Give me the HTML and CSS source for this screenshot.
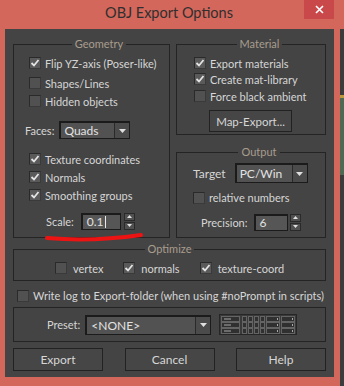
FILE: index.html
```html
<!DOCTYPE html>
<html>
<head>
<meta charset="utf-8">
<title>OBJ Export Options</title>
<link rel="stylesheet" href="styles.css">
</head>
<body>
<div class="screen">
  <div class="titlebar">
    <div class="title">OBJ Export Options</div>
    <div class="close">
      <svg width="9" height="9" viewBox="0 0 9 9"><path d="M1 1 L8 8 M8 1 L1 8" stroke="#ffffff" stroke-width="1.6" fill="none"/></svg>
    </div>
  </div>
  <div class="lower">
    <div class="frame">
      <div class="dialog">
        <div class="top-row">
          <div class="group geometry">
            <div class="legend">Geometry</div>
            <div class="cb-row r-flip"><span class="cb on"><svg width="10" height="10" viewBox="0 0 10 10"><path d="M1.5 5 L4 7.5 L8.5 2" stroke="#e4e4e4" stroke-width="1.8" fill="none"/></svg></span><span>Flip YZ-axis (Poser-like)</span></div>
            <div class="cb-row r-shapes"><span class="cb"></span><span>Shapes/Lines</span></div>
            <div class="cb-row"><span class="cb"></span><span>Hidden objects</span></div>
            <div class="field-row r-faces">
              <span class="lbl">Faces:</span>
              <div class="select faces-select"><span class="sel-text">Quads</span><span class="sel-arrow"><svg width="7" height="4" viewBox="0 0 7 4"><path d="M0 0 H7 L3.5 4 Z" fill="#e0e0e0"/></svg></span></div>
            </div>
            <div class="cb-row r-tex"><span class="cb on"><svg width="10" height="10" viewBox="0 0 10 10"><path d="M1.5 5 L4 7.5 L8.5 2" stroke="#e4e4e4" stroke-width="1.8" fill="none"/></svg></span><span>Texture coordinates</span></div>
            <div class="cb-row"><span class="cb on"><svg width="10" height="10" viewBox="0 0 10 10"><path d="M1.5 5 L4 7.5 L8.5 2" stroke="#e4e4e4" stroke-width="1.8" fill="none"/></svg></span><span>Normals</span></div>
            <div class="cb-row"><span class="cb on"><svg width="10" height="10" viewBox="0 0 10 10"><path d="M1.5 5 L4 7.5 L8.5 2" stroke="#e4e4e4" stroke-width="1.8" fill="none"/></svg></span><span>Smoothing groups</span></div>
            <div class="field-row r-scale">
              <span class="lbl">Scale:</span>
              <div class="input scale-input">0.1<span class="caret"></span></div>
              <div class="spinner">
                <span class="spin-btn"><svg width="5" height="3" viewBox="0 0 5 3"><path d="M0 3 H5 L2.5 0 Z" fill="#e0e0e0"/></svg></span>
                <span class="spin-btn"><svg width="5" height="3" viewBox="0 0 5 3"><path d="M0 0 H5 L2.5 3 Z" fill="#e0e0e0"/></svg></span>
              </div>
              <svg class="scribble" width="104" height="12" viewBox="0 0 104 12"><path d="M3 6 Q48 10 97 3" stroke="#ee1313" stroke-width="4" stroke-linecap="round" fill="none"/></svg>
            </div>
          </div>
          <div class="right-col">
            <div class="group material">
              <div class="legend">Material</div>
              <div class="cb-row r-m1"><span class="cb on"><svg width="10" height="10" viewBox="0 0 10 10"><path d="M1.5 5 L4 7.5 L8.5 2" stroke="#e4e4e4" stroke-width="1.8" fill="none"/></svg></span><span>Export materials</span></div>
              <div class="cb-row r-m2"><span class="cb on"><svg width="10" height="10" viewBox="0 0 10 10"><path d="M1.5 5 L4 7.5 L8.5 2" stroke="#e4e4e4" stroke-width="1.8" fill="none"/></svg></span><span>Create mat-library</span></div>
              <div class="cb-row r-m3"><span class="cb"></span><span>Force black ambient</span></div>
              <div class="btn map-btn">Map-Export...</div>
            </div>
            <div class="group output">
              <div class="legend">Output</div>
              <div class="field-row r-target">
                <span class="lbl">Target</span>
                <div class="select target-select"><span class="sel-text">PC/Win</span><span class="sel-arrow"><svg width="7" height="4" viewBox="0 0 7 4"><path d="M0 0 H7 L3.5 4 Z" fill="#e0e0e0"/></svg></span></div>
              </div>
              <div class="cb-row r-rel"><span class="cb"></span><span>relative numbers</span></div>
              <div class="field-row r-prec">
                <span class="lbl">Precision:</span>
                <div class="input prec-input">6</div>
                <div class="spinner">
                  <span class="spin-btn"><svg width="5" height="3" viewBox="0 0 5 3"><path d="M0 3 H5 L2.5 0 Z" fill="#e0e0e0"/></svg></span>
                  <span class="spin-btn"><svg width="5" height="3" viewBox="0 0 5 3"><path d="M0 0 H5 L2.5 3 Z" fill="#e0e0e0"/></svg></span>
                </div>
              </div>
            </div>
          </div>
        </div>
        <div class="group optimize">
          <div class="legend">Optimize</div>
          <div class="opt-row">
            <div class="cb-row"><span class="cb"></span><span>vertex</span></div>
            <div class="cb-row"><span class="cb on"><svg width="10" height="10" viewBox="0 0 10 10"><path d="M1.5 5 L4 7.5 L8.5 2" stroke="#e4e4e4" stroke-width="1.8" fill="none"/></svg></span><span>normals</span></div>
            <div class="cb-row"><span class="cb on"><svg width="10" height="10" viewBox="0 0 10 10"><path d="M1.5 5 L4 7.5 L8.5 2" stroke="#e4e4e4" stroke-width="1.8" fill="none"/></svg></span><span>texture-coord</span></div>
          </div>
        </div>
        <div class="cb-row r-log"><span class="cb"></span><span>Write log to Export-folder (when using #noPrompt in scripts)</span></div>
        <div class="group preset">
          <span class="lbl">Preset:</span>
          <div class="select preset-select"><span class="sel-text">&lt;NONE&gt;</span><span class="sel-arrow"><svg width="7" height="4" viewBox="0 0 7 4"><path d="M0 0 H7 L3.5 4 Z" fill="#e0e0e0"/></svg></span></div>
          <svg class="preset-icon" width="78" height="21" viewBox="0 0 78 21">
            <rect x="0.5" y="0.5" width="77" height="20" fill="#3a3a3a" stroke="#262626"/>
            <g fill="#303030" stroke="#646464" stroke-width="1">
              <rect x="2.5" y="2.5" width="18" height="5"/>
              <rect x="23.5" y="2.5" width="4" height="5"/>
              <rect x="29.5" y="2.5" width="4" height="5"/>
              <rect x="35.5" y="2.5" width="4" height="5"/>
              <rect x="41.5" y="2.5" width="4" height="5"/>
              <rect x="47.5" y="2.5" width="13" height="5"/>
              <rect x="62.5" y="2.5" width="13" height="5"/>
              <rect x="2.5" y="8.5" width="18" height="5"/>
              <rect x="23.5" y="8.5" width="4" height="5"/>
              <rect x="29.5" y="8.5" width="4" height="5"/>
              <rect x="35.5" y="8.5" width="4" height="5"/>
              <rect x="41.5" y="8.5" width="4" height="5"/>
              <rect x="47.5" y="8.5" width="13" height="5"/>
              <rect x="62.5" y="8.5" width="13" height="5"/>
              <rect x="2.5" y="14.5" width="18" height="5"/>
              <rect x="23.5" y="14.5" width="4" height="5"/>
              <rect x="29.5" y="14.5" width="4" height="5"/>
              <rect x="35.5" y="14.5" width="4" height="5"/>
              <rect x="41.5" y="14.5" width="4" height="5"/>
              <rect x="47.5" y="14.5" width="13" height="5"/>
              <rect x="62.5" y="14.5" width="13" height="5"/>
            </g>
            <g fill="#a8a8a8">
              <rect x="5" y="4.5" width="7" height="1"/>
              <rect x="5" y="10.5" width="7" height="1"/>
              <rect x="5" y="16.5" width="7" height="1"/>
              <rect x="58" y="4" width="1" height="2"/>
              <rect x="73" y="4" width="1" height="2"/>
              <rect x="58" y="10" width="1" height="2"/>
              <rect x="73" y="10" width="1" height="2"/>
              <rect x="58" y="16" width="1" height="2"/>
              <rect x="73" y="16" width="1" height="2"/>
            </g>
          </svg>
        </div>
        <div class="btn-row">
          <div class="btn">Export</div>
          <div class="btn">Cancel</div>
          <div class="btn">Help</div>
        </div>
      </div>
    </div>
    <div class="strip"><div class="strip-green"></div></div>
  </div>
</div>
</body>
</html>
```

FILE: styles.css
```css
* { box-sizing: border-box; }
html, body { margin: 0; padding: 0; }
body {
  width: 344px;
  height: 386px;
  overflow: hidden;
  background: #3b3b3b;
  font-family: Lato, "Noto Sans", sans-serif;
  font-size: 11px;
  color: #d6d6d6;
}
.screen { width: 344px; height: 386px; display: flex; flex-direction: column; }
.titlebar {
  height: 29px;
  flex: none;
  background: #d4675b;
  display: flex;
  padding-left: 34px;
}
.title {
  flex: 1;
  text-align: center;
  font-family: Lato, "Noto Sans", sans-serif;
  font-size: 14.5px;
  line-height: 26px;
  color: #2f2f2f;
}
.close {
  width: 30px;
  height: 19px;
  margin-right: 10px;
  background: #c9484a;
  display: flex;
  align-items: center;
  justify-content: center;
}
.lower { flex: 1; display: flex; }
.frame { width: 340px; flex: none; background: #d4675b; padding: 0 6px 9px 5px; }
.strip { flex: 1; background: #3c3c3c; padding-top: 66px; }
.strip-green { height: 80px; background: #4e6a52; border-top: 3px solid #b89a3c; }

.dialog {
  height: 348px;
  background: #444444;
  padding: 15px 8px 6px;
  display: flex;
  flex-direction: column;
}
.top-row { display: flex; gap: 6px; height: 194px; flex: none; }
.group { border: 1px solid #242424; display: flex; flex-direction: column; }
.legend {
  align-self: center;
  margin-top: -8px;
  padding: 0 3px;
  line-height: 14px;
  height: 14px;
  background: #444444;
  color: #a99d8e;
}
.cb-row { display: flex; align-items: center; height: 18px; gap: 4px; white-space: nowrap; flex: none; }
.cb {
  width: 12px;
  height: 12px;
  flex: none;
  background: #515151;
  border: 1px solid #2a2a2a;
  border-right-color: #3a3a3a;
  border-bottom-color: #3a3a3a;
  display: flex;
  align-items: center;
  justify-content: center;
}
.cb.on { background: #5a5a5a; }
.field-row { display: flex; align-items: center; flex: none; }

/* geometry */
.geometry { width: 157px; padding: 0 0 6px 15px; }
.r-flip { margin-top: 3px; }
.r-shapes { margin-top: 2px; }
.r-faces { margin-top: 11px; height: 18px; margin-left: -4px; gap: 5px; }
.r-tex { margin-top: 11px; }
.r-scale { margin-top: 8px; height: 18px; margin-left: 17px; gap: 7px; position: relative; }
.scribble { position: absolute; left: -2px; top: 20px; }

.select {
  display: flex;
  background: #525252;
  border: 1px solid #1b1b1b;
  border-top-width: 2px;
  border-left-width: 2px;
}
.sel-text { flex: 1; padding-left: 3px; line-height: 16px; color: #e2e2e2; font-size: 12px; }
.sel-arrow {
  width: 15px;
  border-left: 1px solid #2a2a2a;
  background: #4b4b4b;
  display: flex;
  align-items: center;
  justify-content: center;
}
.faces-select { width: 71px; height: 18px; }
.faces-select .sel-text { line-height: 15px; }

.input {
  background: #565656;
  border: 1px solid #1b1b1b;
  border-top-width: 2px;
  border-left-width: 2px;
  height: 17px;
  padding-left: 4px;
  line-height: 14px;
  color: #e2e2e2;
  font-size: 12px;
  display: flex;
  align-items: center;
}
.scale-input { width: 40px; }
.caret { width: 1px; height: 12px; background: #e8e8e8; margin-left: 1px; }
.spinner { width: 11px; height: 17px; display: flex; flex-direction: column; gap: 1px; margin-left: -4px; }
.spin-btn {
  flex: 1;
  background: #505050;
  border: 1px solid #2a2a2a;
  display: flex;
  align-items: center;
  justify-content: center;
}

/* right column */
.right-col { width: 150px; display: flex; flex-direction: column; }
.material { height: 91px; padding-left: 17px; }
.material .cb-row { height: 16px; }
.r-m1 { margin-top: 4px; }
.r-m3 { margin-top: 1px; }
.btn {
  background: #464646;
  border: 1px solid #222222;
  display: flex;
  align-items: center;
  justify-content: center;
  color: #d6d6d6;
  font-size: 11.5px;
}
.map-btn { width: 83px; height: 22px; margin: 6px 0 0 15px; }

.output { height: 86px; margin-top: 17px; padding-left: 16px; }
.r-target { margin-top: 4px; height: 20px; gap: 9px; }
.r-target .lbl { font-size: 12px; }
.target-select { width: 73px; height: 20px; }
.target-select .sel-text { line-height: 17px; }
.r-rel { margin-top: 6px; height: 17px; }
.r-prec { margin-top: 7px; height: 18px; margin-left: 8px; gap: 6px; }
.prec-input { width: 34px; }

/* optimize */
.optimize { height: 32px; margin-top: 11px; flex: none; }
.opt-row { display: flex; justify-content: center; gap: 20px; margin-top: 3px; }
.opt-row .cb-row { gap: 6px; }

.r-log { margin-top: 6px; height: 17px; padding-left: 4px; }

/* preset */
.preset {
  flex-direction: row;
  align-items: center;
  height: 35px;
  margin-top: 3px;
  padding-left: 33px;
  flex: none;
}
.preset .lbl { margin-right: 5px; }
.preset-select { width: 126px; height: 20px; }
.preset-select .sel-text { line-height: 17px; padding-left: 4px; }
.preset-icon { margin-left: 8px; }

.btn-row { display: flex; justify-content: space-between; margin-top: 6px; height: 23px; flex: none; }
.btn-row .btn { width: 90px; height: 23px; font-size: 12px; }
```
